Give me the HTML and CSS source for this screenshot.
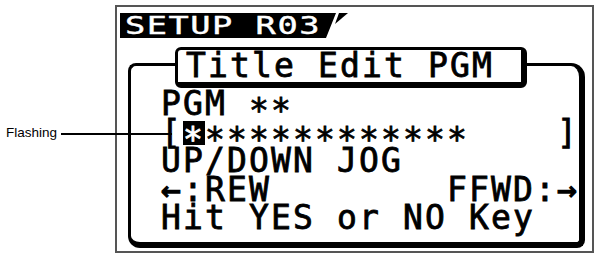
FILE: index.html
```html
<!DOCTYPE html>
<html lang="en">
<head>
<meta charset="utf-8">
<title>SETUP R03 - Title Edit PGM</title>
<link rel="stylesheet" href="styles.css">
</head>
<body>
<div class="page">
  <div class="callout"><span class="callout-text">Flashing</span><span class="leader"></span></div>
  <div class="frame">
    <div class="head"><div class="head-bar"><span class="head-text">SETUP R03</span></div><div class="head-tip"></div></div>
    <div class="lcd">
      <div class="lcd-top">
        <div class="seg seg-left"></div>
        <div class="title-tab">Title Edit PGM</div>
        <div class="seg seg-right"></div>
      </div>
      <div class="lcd-body">
        <div class="row">PGM <span class="ast">**</span></div>
        <div class="row">[<span class="cursor"><span class="ast">*</span></span><span class="ast">************</span>    ]</div>
        <div class="row">UP/DOWN JOG</div>
        <div class="row"><span class="arrow">←</span>:REW        FFWD:<span class="arrow">→</span></div>
        <div class="row">Hit YES or NO Key</div>
      </div>
    </div>
  </div>
</div>
</body>
</html>
```
FILE: styles.css
```css
html, body {
  margin: 0;
  padding: 0;
  background: #fff;
}

.page {
  display: flex;
  width: 595px;
  height: 254px;
  overflow: hidden;
}

/* Callout label on the left */
.callout {
  position: relative;
  flex: none;
  width: 115px;
  box-sizing: border-box;
  padding-top: 125px;
  font: 13.5px/16px "Liberation Sans", Arial, sans-serif;
  color: #000;
}

.callout-text {
  display: block;
  padding-left: 6px;
}

.leader {
  position: absolute;
  left: 61px;
  top: 133px;
  width: 111px;
  height: 1.5px;
  background: #000;
  z-index: 2;
}

/* Outer gray picture frame */
.frame {
  flex: none;
  width: 479px;
  height: 248px;
  margin-top: 5px;
  box-sizing: border-box;
  border: 2px solid #555;
}

/* Inverted header tab */
.head {
  display: flex;
  height: 25px;
  margin: 6px 0 0 3px;
}

.head-bar {
  width: 216px;
  box-sizing: border-box;
  padding-left: 5px;
  background: #000;
  clip-path: polygon(0 0, 100% 0, calc(100% - 10px) 100%, 0 100%);
  color: #fff;
  font: 24px/27px "DejaVu Sans Mono", monospace;
  -webkit-text-stroke: 0.4px #fff;
  white-space: pre;
}

.head-text {
  display: inline-block;
  letter-spacing: 1.1px;
  transform: scaleX(1.4);
  transform-origin: 0 0;
}

.head-tip {
  width: 13px;
  height: 11px;
  margin-left: -1px;
  background: #000;
  clip-path: polygon(4px 0, 13px 0, 0 11px);
}

/* LCD box */
.lcd {
  width: 457px;
  margin: 9px 0 0 11px;
  color: #000;
  font: 33px "DejaVu Sans Mono", monospace;
  -webkit-text-stroke: 0.8px #000;
  letter-spacing: 2.13px;
}

.lcd-top {
  display: flex;
  height: 41px;
}

.seg {
  box-sizing: border-box;
  height: 25px;
  margin-top: 16px;
  border-top: 3px solid #000;
}

.seg-left {
  width: 47px;
  border-left: 3px solid #000;
  border-top-left-radius: 8px;
}

.seg-right {
  flex: 1;
  border-right: 6px solid #000;
  border-top-right-radius: 14px;
}

.title-tab {
  flex: none;
  width: 352px;
  height: 41px;
  box-sizing: border-box;
  padding-left: 8px;
  border: 3px solid #000;
  border-right-width: 6px;
  border-bottom-width: 6px;
  border-radius: 6px;
  line-height: 32px;
  white-space: pre;
}

.lcd-body {
  border: 0 solid #000;
  border-left-width: 3px;
  border-right-width: 6px;
  border-bottom-width: 6px;
  border-radius: 0 0 8px 12px;
  padding: 2px 0 9px 30px;
}

.row {
  height: 28.5px;
  line-height: 28.5px;
  white-space: pre;
}

.ast {
  vertical-align: -7px;
}

.cursor {
  display: inline-block;
  height: 24px;
  line-height: 24px;
  background: #000;
  color: #fff;
  -webkit-text-stroke: 0.8px #fff;
}

.arrow {
  -webkit-text-stroke: 1.2px #000;
}
```
